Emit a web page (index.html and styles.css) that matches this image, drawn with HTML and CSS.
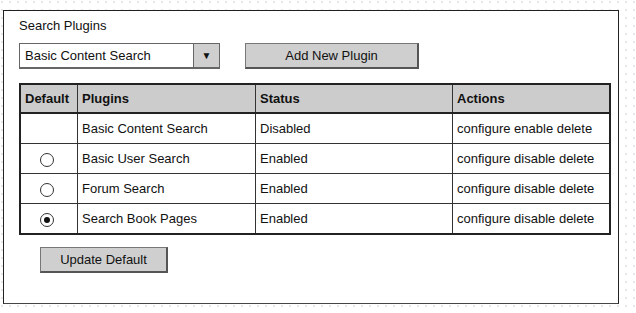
FILE: index.html
```html
<!DOCTYPE html>
<html lang="en">
<head>
    <meta charset="UTF-8">
    <title>Search Plugins</title>
    <link rel="stylesheet" href="styles.css">
</head>
<body>
    <div class="panel">
        <div class="panel-title">Search Plugins</div>

        <div class="toolbar">
            <div class="select">
                <span class="select-value">Basic Content Search</span>
                <span class="select-arrow">&#9660;</span>
            </div>
            <button class="btn btn-add">Add New Plugin</button>
        </div>

        <table class="plugins">
            <thead>
                <tr>
                    <th class="col-default">Default</th>
                    <th class="col-name">Plugins</th>
                    <th class="col-status">Status</th>
                    <th class="col-actions">Actions</th>
                </tr>
            </thead>
            <tbody>
                <tr>
                    <td class="radio-cell"></td>
                    <td>Basic Content Search</td>
                    <td>Disabled</td>
                    <td>configure enable delete</td>
                </tr>
                <tr>
                    <td class="radio-cell"><span class="radio"></span></td>
                    <td>Basic User Search</td>
                    <td>Enabled</td>
                    <td>configure disable delete</td>
                </tr>
                <tr>
                    <td class="radio-cell"><span class="radio"></span></td>
                    <td>Forum Search</td>
                    <td>Enabled</td>
                    <td>configure disable delete</td>
                </tr>
                <tr>
                    <td class="radio-cell"><span class="radio checked"></span></td>
                    <td>Search Book Pages</td>
                    <td>Enabled</td>
                    <td>configure disable delete</td>
                </tr>
            </tbody>
        </table>

        <button class="btn btn-update">Update Default</button>
    </div>
</body>
</html>
```

FILE: styles.css
```css
body {
    margin: 0;
    font-family: "Liberation Sans", Arial, sans-serif;
    font-size: 13px;
    color: #111;
    background-color: #fff;
    background-image: radial-gradient(circle, #e6e6e6 0.7px, transparent 1px);
    background-size: 8px 8px;
    background-position: -2px -2px;
    height: 313px;
}

.panel {
    box-sizing: border-box;
    margin: 10px 0 0 3px;
    width: 616px;
    height: 294px;
    padding: 6px 0 0 15px;
    background: #fff;
    border: 1px solid #222;
    border-bottom-color: #444;
}

.panel-title {
    line-height: 17px;
}

.toolbar {
    display: flex;
    gap: 25px;
    margin-top: 9px;
}

.select {
    box-sizing: border-box;
    display: flex;
    width: 201px;
    height: 26px;
    border: 1px solid #666;
    border-bottom-width: 2px;
}

.select-value {
    flex: 1;
    padding-left: 5px;
    line-height: 23px;
}

.select-arrow {
    width: 25px;
    background: #cfcfcf;
    border-left: 1px solid #666;
    text-align: center;
    font-size: 10px;
    line-height: 23px;
}

.btn {
    box-sizing: border-box;
    font-family: inherit;
    font-size: 13px;
    color: #111;
    background: #cfcfcf;
    border: 1px solid #777;
    border-right: 2px solid #555;
    border-bottom: 2px solid #555;
    padding: 0;
}

.btn-add {
    width: 174px;
    height: 26px;
}

.plugins {
    margin-top: 14px;
    width: 592px;
    border-collapse: collapse;
    border: 2px solid #222;
}

.plugins th,
.plugins td {
    height: 29px;
    padding: 0 0 0 4px;
    border: 1px solid #333;
    text-align: left;
    white-space: nowrap;
}

.plugins th {
    height: 27px;
    background: #cccccc;
    font-weight: bold;
    border-bottom: 2px solid #222;
}

.col-default { width: 52px; }
.col-name { width: 173px; }
.col-status { width: 192px; }

.plugins td.radio-cell {
    padding: 0;
    text-align: center;
}

.radio {
    display: inline-block;
    box-sizing: border-box;
    width: 14px;
    height: 14px;
    margin-top: 2px;
    border: 1px solid #333;
    border-radius: 50%;
    vertical-align: middle;
    position: relative;
    left: -2px;
}

.radio.checked::after {
    content: "";
    position: absolute;
    left: 3px;
    top: 3px;
    width: 6px;
    height: 6px;
    border-radius: 50%;
    background: #111;
}

.btn-update {
    display: block;
    width: 128px;
    height: 26px;
    margin: 12px 0 0 21px;
}
```
